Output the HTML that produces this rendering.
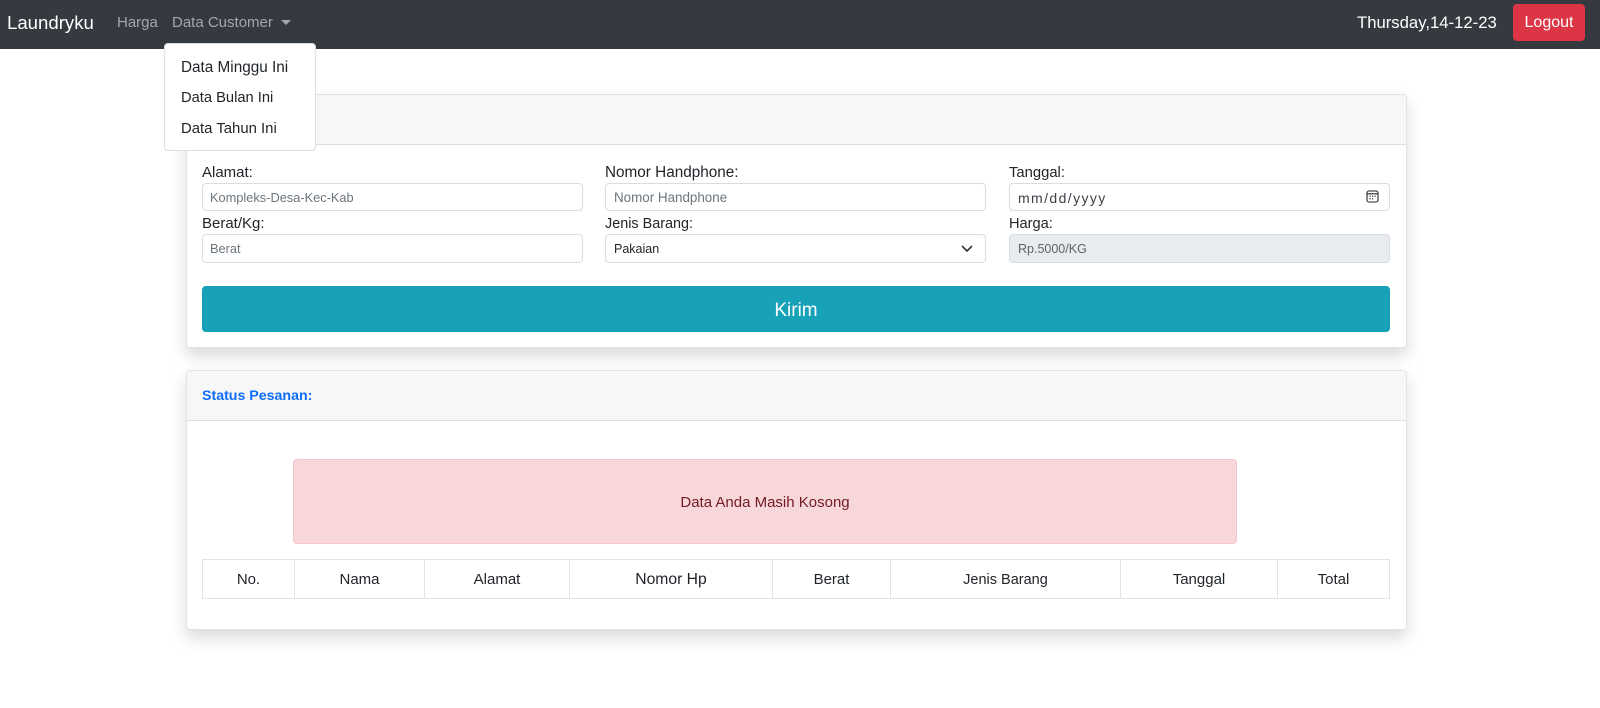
<!DOCTYPE html>
<html lang="id">
<head>
<meta charset="utf-8">
<title>Laundryku</title>
<style>
*{box-sizing:border-box}
html,body{margin:0;padding:0;width:1600px;height:708px;overflow:hidden;background:#fff}
body{font-family:"Liberation Sans",sans-serif;color:#212529;position:relative}
.a{position:absolute}
.t{position:absolute;white-space:nowrap;line-height:20px;height:20px}
.card{position:absolute;left:186px;width:1221px;background:#fff;border:1px solid #e3e3e3;border-radius:4px;box-shadow:0 8px 16px rgba(0,0,0,.15)}
.head{position:absolute;left:0;top:0;right:0;height:50px;background:#f7f7f7;border-bottom:1px solid #dedede;border-radius:3px 3px 0 0}
.inp{position:absolute;height:29px;width:381px;background:#fff;border:1px solid #d9dde1;border-radius:4px}
.lbl{font-size:15px;color:#212529}
.ph{font-size:12.8px;color:#6c757d}
.th{position:absolute;top:559px;height:40px;border:1px solid #e2e4e7;font-size:15px;line-height:40px;text-align:center;color:#212529;background:#fff}
</style>
</head>
<body>
<div class="a" style="left:0;top:0;width:1600px;height:49px;background:#343a40"></div>
<div class="t" style="left:7px;top:13px;font-size:18.6px;color:#fff">Laundryku</div>
<div class="t" style="left:117px;top:13px;font-size:15px;color:rgba(255,255,255,.55)">Harga</div>
<div class="t" style="left:172px;top:13px;font-size:15px;color:rgba(255,255,255,.55)">Data Customer</div>
<div class="a" style="left:281px;top:20px;width:0;height:0;border-left:5px solid transparent;border-right:5px solid transparent;border-top:5px solid rgba(255,255,255,.55)"></div>
<div class="t" style="left:1357px;top:13px;font-size:16.7px;color:#fff">Thursday,14-12-23</div>
<div class="a" style="left:1513px;top:4px;width:72px;height:37px;background:#dc3545;border-radius:4px;color:#fff;font-size:16px;line-height:37px;text-align:center">Logout</div>

<div class="card" style="top:94px;height:254px">
  <div class="head"></div>
</div>
<div class="t lbl" style="left:202px;top:163px">Alamat:</div>
<div class="inp" style="left:202px;top:183px;height:28px"></div>
<div class="t ph" style="left:210px;top:188px">Kompleks-Desa-Kec-Kab</div>
<div class="t lbl" style="left:605px;top:163px;font-size:15.3px">Nomor Handphone:</div>
<div class="inp" style="left:605px;top:183px;height:28px"></div>
<div class="t ph" style="left:614px;top:188px;font-size:13.4px">Nomor Handphone</div>
<div class="t lbl" style="left:1009px;top:163px;font-size:14.800px">Tanggal:</div>
<div class="inp" style="left:1009px;top:183px;height:28px"></div>
<div class="t" style="left:1018px;top:188px;font-size:14px;letter-spacing:1.4px;color:#3b4248">mm/dd/yyyy</div>
<svg class="a" style="left:1366px;top:190px" width="13" height="13" viewBox="0 0 13 13"><rect x="1" y="1" width="11" height="11" rx="2" fill="none" stroke="#222" stroke-width="1.1"/><path d="M1 3.800h11" stroke="#222" stroke-width="1.100"/><path d="M3.500 6.200h1.200M6 6.200h1.200M8.500 6.200h1.200M3.500 8.800h1.200M6 8.800h1.200" stroke="#222" stroke-width="1.200"/></svg>
<div class="t lbl" style="left:202px;top:214px">Berat/Kg:</div>
<div class="inp" style="left:202px;top:234px"></div>
<div class="t ph" style="left:210px;top:239px">Berat</div>
<div class="t lbl" style="left:605px;top:214px;font-size:14.4px">Jenis Barang:</div>
<div class="inp" style="left:605px;top:234px"></div>
<div class="t" style="left:614px;top:239px;font-size:12.500px;color:#212529">Pakaian</div>
<svg class="a" style="left:961px;top:244px" width="12" height="10" viewBox="0 0 12 10"><path d="M1.500 2.500 6 7l4.500-4.500" fill="none" stroke="#343a40" stroke-width="1.700" stroke-linecap="round" stroke-linejoin="round"/></svg>
<div class="t lbl" style="left:1009px;top:214px;font-size:14.6px">Harga:</div>
<div class="inp" style="left:1009px;top:234px;background:#e9ecef"></div>
<div class="t" style="left:1018px;top:239px;font-size:12.500px;color:#5c636a">Rp.5000/KG</div>
<div class="a" style="left:202px;top:286px;width:1188px;height:46px;background:#17a2b8;border:1px solid #149db3;border-radius:4px;color:#fff;font-size:19px;line-height:48px;text-align:center">Kirim</div>

<div class="a" style="left:164px;top:43px;width:152px;height:108px;background:#fff;border:1px solid #dedede;border-radius:4px;z-index:3"></div>
<div class="t" style="left:181px;top:58px;font-size:15.3px;z-index:4">Data Minggu Ini</div>
<div class="t" style="left:181px;top:88px;font-size:14.7px;z-index:4">Data Bulan Ini</div>
<div class="t" style="left:181px;top:119px;font-size:14.900px;z-index:4">Data Tahun Ini</div>

<div class="card" style="top:370px;height:260px">
  <div class="head"></div>
</div>
<div class="t" style="left:202px;top:386px;font-size:14.2px;font-weight:700;color:#0d6efd">Status Pesanan:</div>
<div class="a" style="left:293px;top:459px;width:944px;height:85px;background:#f8d7da;border:1px solid #f5c6cb;border-radius:4px;color:#721c24;font-size:15px;line-height:85px;text-align:center">Data Anda Masih Kosong</div>

<div class="th" style="left:202px;width:93px">No.</div>
<div class="th" style="left:294px;width:131px">Nama</div>
<div class="th" style="left:424px;width:146px">Alamat</div>
<div class="th" style="left:569px;width:204px;font-size:15.7px">Nomor Hp</div>
<div class="th" style="left:772px;width:119px">Berat</div>
<div class="th" style="left:890px;width:231px;font-size:14.5px">Jenis Barang</div>
<div class="th" style="left:1120px;width:158px">Tanggal</div>
<div class="th" style="left:1277px;width:113px">Total</div>
</body>
</html>
